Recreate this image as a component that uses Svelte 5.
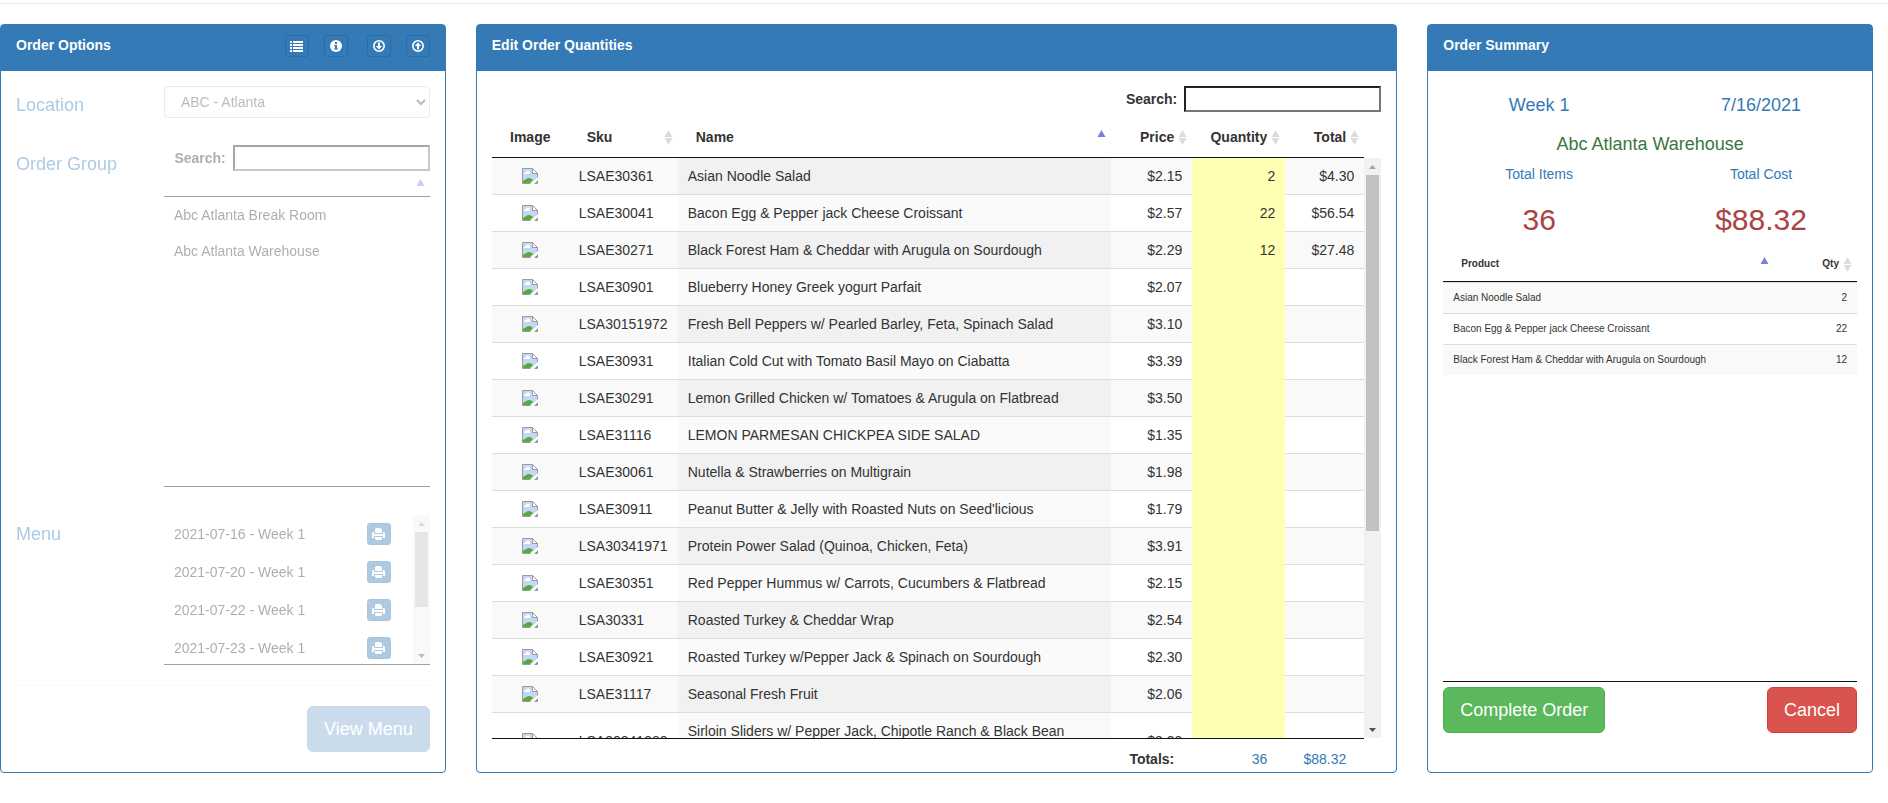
<script lang="ts">
  type Product = { sku: string; name: string; price: string; qty?: number; total?: string };

  const products: Product[] = [
    { sku: 'LSAE30361', name: 'Asian Noodle Salad', price: '$2.15', qty: 2, total: '$4.30' },
    { sku: 'LSAE30041', name: 'Bacon Egg & Pepper jack Cheese Croissant', price: '$2.57', qty: 22, total: '$56.54' },
    { sku: 'LSAE30271', name: 'Black Forest Ham & Cheddar with Arugula on Sourdough', price: '$2.29', qty: 12, total: '$27.48' },
    { sku: 'LSAE30901', name: 'Blueberry Honey Greek yogurt Parfait', price: '$2.07' },
    { sku: 'LSA30151972', name: 'Fresh Bell Peppers w/ Pearled Barley, Feta, Spinach Salad', price: '$3.10' },
    { sku: 'LSAE30931', name: 'Italian Cold Cut with Tomato Basil Mayo on Ciabatta', price: '$3.39' },
    { sku: 'LSAE30291', name: 'Lemon Grilled Chicken w/ Tomatoes & Arugula on Flatbread', price: '$3.50' },
    { sku: 'LSAE31116', name: 'LEMON PARMESAN CHICKPEA SIDE SALAD', price: '$1.35' },
    { sku: 'LSAE30061', name: 'Nutella & Strawberries on Multigrain', price: '$1.98' },
    { sku: 'LSAE30911', name: "Peanut Butter & Jelly with Roasted Nuts on Seed'licious", price: '$1.79' },
    { sku: 'LSA30341971', name: 'Protein Power Salad (Quinoa, Chicken, Feta)', price: '$3.91' },
    { sku: 'LSAE30351', name: 'Red Pepper Hummus w/ Carrots, Cucumbers & Flatbread', price: '$2.15' },
    { sku: 'LSA30331', name: 'Roasted Turkey & Cheddar Wrap', price: '$2.54' },
    { sku: 'LSAE30921', name: 'Roasted Turkey w/Pepper Jack & Spinach on Sourdough', price: '$2.30' },
    { sku: 'LSAE31117', name: 'Seasonal Fresh Fruit', price: '$2.06' },
    { sku: 'LSA30341980', name: 'Sirloin Sliders w/ Pepper Jack, Chipotle Ranch & Black Bean Sandwich', price: '$3.30' },
  ];

  const orderGroups = ['Abc Atlanta Break Room', 'Abc Atlanta Warehouse'];
  const menus = ['2021-07-16', '2021-07-20', '2021-07-22', '2021-07-23'];

  const ordered = products.filter((p) => p.qty);
  const totalItems = ordered.reduce((sum, p) => sum + (p.qty ?? 0), 0);
  const totalCost = '$88.32';
</script>

{#snippet sortIcon(asc: boolean)}
  <svg class="sort" width="9" height="15" viewBox="0 0 9 15" aria-hidden="true">
    {#if asc}
      <path d="M4.5 0L8.5 7h-8z" fill="#7b7fdd" />
    {:else}
      <path d="M4.5 0L8.5 7h-8zM.5 8h8l-4 7z" fill="#dcdcdc" />
    {/if}
  </svg>
{/snippet}

{#snippet scrollbar(size: string)}
  <div class="scrollbar" aria-hidden="true">
    <svg width="17" height="17" viewBox="0 0 17 17"><path d="M5 11h7L8.5 7z" fill="#a3a3a3" /></svg>
    <div class="track"><div class="thumb {size}"></div></div>
    <svg width="17" height="17" viewBox="0 0 17 17"><path d="M5 7h7l-3.5 4z" fill="#505050" /></svg>
  </div>
{/snippet}

<hr class="page-rule" />

<main>
  <section class="panel">
    <header>
      <h3>Order Options</h3>
      <div class="tools">
        <button class="btn-xs" aria-label="List">
          <svg width="13" height="12" viewBox="0 0 13 12" fill="#fff">
            <path d="M0 1h2v2H0zM3 1h10v2H3zM0 4h2v2H0zM3 4h10v2H3zM0 7h2v2H0zM3 7h10v2H3zM0 10h2v2H0zM3 10h10v2H3z" />
          </svg>
        </button>
        <button class="btn-xs" aria-label="Info">
          <svg width="12" height="12" viewBox="0 0 12 12">
            <circle cx="6" cy="6" r="6" fill="#fff" />
            <path d="M5 2h2v2H5zM4 5h3v3.5h1v1H4v-1h1V6H4z" fill="#337ab7" />
          </svg>
        </button>
      </div>
      <div class="tools">
        <button class="btn-xs" aria-label="Download">
          <svg width="12" height="12" viewBox="0 0 12 12">
            <circle cx="6" cy="6" r="5.2" fill="none" stroke="#fff" stroke-width="1.6" />
            <path d="M5 2.5h2V6h2.2L6 9.5 2.8 6H5z" fill="#fff" />
          </svg>
        </button>
        <button class="btn-xs" aria-label="Upload">
          <svg width="12" height="12" viewBox="0 0 12 12">
            <circle cx="6" cy="6" r="5.2" fill="none" stroke="#fff" stroke-width="1.6" />
            <path d="M5 9.5h2V6h2.2L6 2.5 2.8 6H5z" fill="#fff" />
          </svg>
        </button>
      </div>
    </header>

    <div class="body faded">
      <div class="field">
        <h4><label for="location">Location</label></h4>
        <select id="location">
          <option>ABC - Atlanta</option>
        </select>
      </div>

      <div class="field groups">
        <h4>Order Group</h4>
        <div class="control">
          <div class="search">
            <label for="group-search">Search:</label>
            <input id="group-search" type="search" />
          </div>
          <div class="list-head">{@render sortIcon(true)}</div>
          <ul class="group-list">
            {#each orderGroups as group}
              <li>{group}</li>
            {/each}
          </ul>
        </div>
      </div>

      <div class="field">
        <h4>Menu</h4>
        <div class="control menu-scroll">
          <ul class="menu-list">
            {#each menus as date}
              <li>
                <span>{date} - Week 1</span>
                <button class="btn-xs" aria-label="Print {date}">
                  <svg width="13" height="12" viewBox="0 0 13 12" fill="#fff">
                    <path d="M4 0h4l2 1.5V5H3V1z" />
                    <path d="M1 4h1v2h9V4h1l1 1v5h-2V8H2v2H0V5z" />
                    <path d="M3 9h7v2l-1 1H4l-1-1z" />
                  </svg>
                </button>
              </li>
            {/each}
          </ul>
          {@render scrollbar('short')}
        </div>
      </div>

      <hr />
      <div class="actions end">
        <button class="btn-lg primary" disabled>View Menu</button>
      </div>
    </div>
  </section>

  <section class="panel wide">
    <header><h3>Edit Order Quantities</h3></header>
    <div class="body quantities">
      <div class="search">
        <label for="product-search">Search:</label>
        <input id="product-search" type="search" />
      </div>

      <div class="grid-scroll">
        <div class="grid-view">
          <table class="products">
            <colgroup>
              <col class="c-image" />
              <col class="c-sku" />
              <col />
              <col class="c-price" />
              <col class="c-qty" />
              <col class="c-total" />
            </colgroup>
            <thead>
              <tr>
                <th class="image">Image</th>
                <th><div class="th">Sku {@render sortIcon(false)}</div></th>
                <th><div class="th">Name {@render sortIcon(true)}</div></th>
                <th><div class="th num">Price {@render sortIcon(false)}</div></th>
                <th><div class="th num">Quantity {@render sortIcon(false)}</div></th>
                <th><div class="th num">Total {@render sortIcon(false)}</div></th>
              </tr>
            </thead>
            <tbody>
              {#each products as product}
                <tr>
                  <td class="image">
                    <svg width="16" height="16" viewBox="0 0 16 16" role="img" aria-label="Product image">
                      <path d="M.5.5h10l5 5v10H.5z" fill="#c6d6f5" stroke="#9b9b9b" />
                      <path d="M10.5.5v5h5z" fill="#fff" stroke="#9b9b9b" />
                      <path d="M2 6a2 2 0 0 1 2-2 2 2 0 0 1 4 1v1z" fill="#fff" />
                      <path d="M1 15v-2c2-1 4-3 6-3s3 1 4 2l-3 3zM12 15l3-2v2z" fill="#54ad3a" />
                      <path d="M8 16l8-7v3l-4 4z" fill="#fff" />
                    </svg>
                  </td>
                  <td>{product.sku}</td>
                  <td class="name">{product.name}</td>
                  <td class="num">{product.price}</td>
                  <td class="num qty">{product.qty ?? ''}</td>
                  <td class="num">{product.total ?? ''}</td>
                </tr>
              {/each}
            </tbody>
          </table>
        </div>
        {@render scrollbar('long')}
      </div>

      <div class="totals">
        <strong>Totals:</strong>
        <span class="t-qty">{totalItems}</span>
        <span class="t-cost">{totalCost}</span>
      </div>
    </div>
  </section>

  <section class="panel">
    <header><h3>Order Summary</h3></header>
    <div class="body">
      <div class="pair">
        <h4>Week 1</h4>
        <h4>7/16/2021</h4>
      </div>
      <h4 class="site">Abc Atlanta Warehouse</h4>
      <div class="pair">
        <div>Total Items<h2>{totalItems}</h2></div>
        <div>Total Cost<h2>{totalCost}</h2></div>
      </div>

      <div class="summary-scroll">
        <table class="summary">
          <colgroup>
            <col />
            <col class="c-sum-qty" />
          </colgroup>
          <thead>
            <tr>
              <th><div class="th">Product {@render sortIcon(true)}</div></th>
              <th><div class="th num">Qty {@render sortIcon(false)}</div></th>
            </tr>
          </thead>
          <tbody>
            {#each ordered as product}
              <tr>
                <td>{product.name}</td>
                <td class="num">{product.qty}</td>
              </tr>
            {/each}
          </tbody>
        </table>
      </div>

      <div class="actions">
        <button class="btn-lg success">Complete Order</button>
        <button class="btn-lg danger">Cancel</button>
      </div>
    </div>
  </section>
</main>

<style>
  :global(body) {
    margin: 0;
    background: #fff;
    color: #333;
    font-family: 'Liberation Sans', Arial, sans-serif;
    font-size: 14px;
    line-height: 20px;
  }

  :global(*) {
    box-sizing: border-box;
  }

  hr {
    width: 100%;
    height: 1px;
    margin: 20px 0;
    border: 0;
    background: #eee;
  }

  .page-rule {
    margin: 3px 0 20px;
  }

  main {
    display: grid;
    grid-template-columns: repeat(4, minmax(0, 1fr));
    gap: 30px;
    padding-right: 15px;
  }

  .panel {
    display: flex;
    flex-direction: column;
    border: 1px solid #337ab7;
    border-radius: 4px;
    box-shadow: 0 1px 1px rgba(0, 0, 0, 0.05);
  }

  .wide {
    grid-column: span 2;
  }

  header {
    display: flex;
    align-items: flex-start;
    gap: 19px;
    min-height: 46px;
    padding: 10px 15px;
    background: #337ab7;
    color: #fff;
  }

  h3 {
    flex: 1;
    margin: 0;
    font-size: 14px;
    line-height: 20px;
  }

  .tools {
    display: flex;
    gap: 15px;
  }

  .body {
    flex: 1;
    display: flex;
    flex-direction: column;
    padding: 15px;
  }

  .faded {
    opacity: 0.4;
  }

  h4 {
    margin: 9px 0 10px;
    color: #337ab7;
    font-size: 18px;
    font-weight: 400;
    line-height: 20px;
  }

  button {
    border: 1px solid;
    color: #fff;
    font-family: inherit;
    cursor: pointer;
  }

  .btn-xs {
    display: flex;
    align-items: center;
    justify-content: center;
    width: 24px;
    height: 22px;
    padding: 0;
    border-color: #2e6da4;
    border-radius: 3px;
    background: #337ab7;
  }

  .btn-lg {
    padding: 10px 16px;
    border-radius: 6px;
    font-size: 18px;
    line-height: 24px;
  }

  .primary {
    border-color: #2e6da4;
    background: #337ab7;
  }

  .success {
    border-color: #4cae4c;
    background: #5cb85c;
  }

  .danger {
    border-color: #d43f3a;
    background: #d9534f;
  }

  button:disabled {
    opacity: 0.65;
    cursor: not-allowed;
  }

  .field {
    display: grid;
    grid-template-columns: repeat(3, minmax(0, 1fr));
    gap: 30px;
  }

  .groups {
    margin: 20px 0 28px;
  }

  select,
  .control {
    grid-column: span 2;
  }

  select {
    width: 100%;
    height: 32px;
    padding: 0 12px;
    border: 1px solid #ccc;
    border-radius: 4px;
    background: #fff;
    color: #555;
    font-family: inherit;
    font-size: 14px;
  }

  .search {
    display: flex;
    align-items: center;
    justify-content: flex-end;
    gap: 7px;
    margin-bottom: 5px;
    font-weight: 700;
  }

  .search input {
    width: 197px;
    height: 26px;
    border: 2px solid;
    border-color: #212121 #767676 #767676 #212121;
    background: #fff;
    font-family: inherit;
    font-size: 14px;
  }

  ul {
    margin: 0;
    padding: 0;
    list-style: none;
  }

  .sort {
    flex: none;
  }

  .list-head {
    display: flex;
    justify-content: flex-end;
    height: 21px;
    padding: 3px 5px 0;
    border-bottom: 1px solid #111;
  }

  .group-list {
    height: 290px;
    border-bottom: 1px solid #111;
  }

  .group-list li {
    padding: 8px 10px;
  }

  .menu-scroll {
    display: flex;
    height: 150px;
    border-bottom: 1px solid #111;
    overflow: hidden;
  }

  .menu-list {
    flex: 1;
  }

  .menu-list li {
    display: flex;
    align-items: center;
    justify-content: space-between;
    height: 38px;
    padding: 0 22px 0 10px;
  }

  .scrollbar {
    display: flex;
    flex-direction: column;
    flex: none;
    width: 17px;
    background: #f1f1f1;
  }

  .track {
    flex: 1;
    padding: 0 2px;
  }

  .thumb {
    background: #c1c1c1;
  }

  .short {
    height: 75px;
  }

  .long {
    height: 356px;
  }

  .actions {
    display: flex;
    justify-content: space-between;
  }

  .end {
    justify-content: flex-end;
  }

  .quantities {
    padding-bottom: 0;
  }

  .grid-scroll {
    display: flex;
    height: 622px;
  }

  .grid-scroll .scrollbar {
    margin: 41px 0 1px;
  }

  .grid-view {
    flex: 1;
    border-bottom: 1px solid #111;
    overflow: hidden;
  }

  table {
    width: 100%;
    table-layout: fixed;
    border-collapse: separate;
    border-spacing: 0;
  }

  .c-image {
    width: 77px;
  }

  .c-sku {
    width: 109px;
  }

  .c-price {
    width: 81px;
  }

  .c-qty {
    width: 93px;
  }

  .c-total {
    width: 79px;
  }

  .c-sum-qty {
    width: 83px;
  }

  th {
    padding: 10px 5px 10px 18px;
    border-bottom: 1px solid #111;
    text-align: left;
  }

  .th {
    display: flex;
    align-items: center;
    justify-content: space-between;
    gap: 4px;
  }

  .th.num {
    justify-content: flex-end;
  }

  td {
    padding: 8px 10px;
    border-top: 1px solid #ddd;
  }

  tbody tr:nth-child(odd) {
    background: #f9f9f9;
  }

  .products tbody tr:first-child td {
    border-top: 0;
  }

  .name {
    background: #fafafa;
  }

  tr:nth-child(odd) .name {
    background: #f1f1f1;
  }

  .num {
    text-align: right;
  }

  .products .qty {
    border-color: #ffffb3;
    background: #ffffb3;
  }

  .products .image {
    padding-right: 0;
    padding-left: 0;
    text-align: center;
  }

  .image svg {
    display: block;
    margin: 0 auto;
  }

  .totals {
    display: flex;
    justify-content: flex-end;
    padding: 10px 17px 3px 0;
    color: #337ab7;
    text-align: right;
  }

  .totals strong {
    padding-right: 18px;
    color: #333;
  }

  .t-qty {
    width: 93px;
    padding-right: 18px;
  }

  .t-cost {
    width: 79px;
    padding-right: 18px;
  }

  .pair {
    display: grid;
    grid-template-columns: 1fr 1fr;
    gap: 30px;
    color: #337ab7;
    text-align: center;
  }

  .site {
    margin-top: 9px;
    color: #3c763d;
    text-align: center;
  }

  h2 {
    margin: 19px 0 11px;
    color: #a94442;
    font-size: 30px;
    font-weight: 400;
    line-height: 33px;
  }

  .summary-scroll {
    height: 435px;
    margin-bottom: 5px;
    border-bottom: 1px solid #111;
  }

  .summary {
    font-size: 10px;
    line-height: 14px;
  }

  .summary .th {
    height: 14px;
  }
</style>
